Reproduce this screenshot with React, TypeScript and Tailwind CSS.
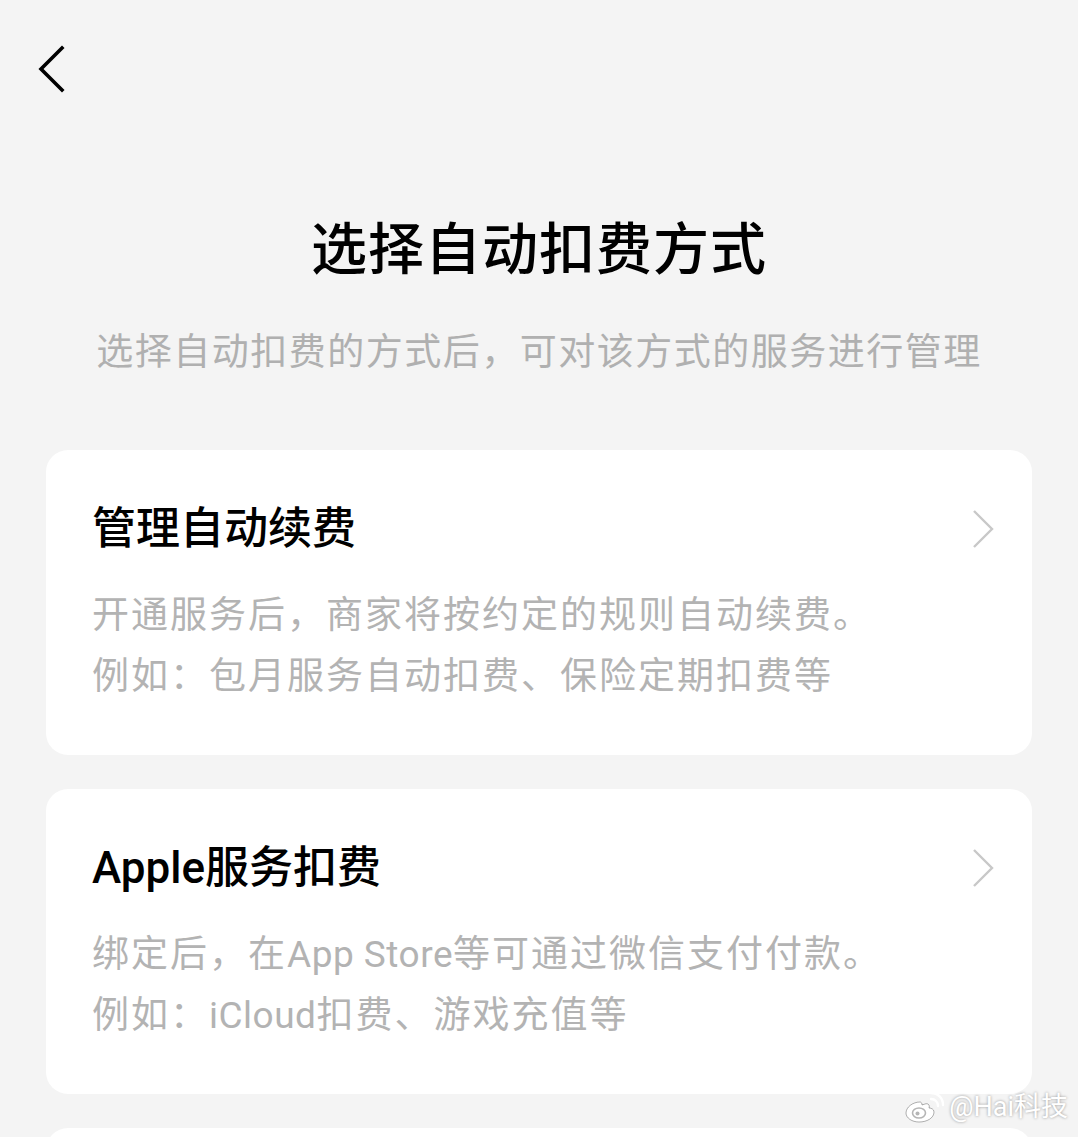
const font = {
  fontFamily: 'Roboto, "Noto Sans CJK SC", sans-serif',
};

interface Option {
  title: string;
  lines: string[];
}

const options: Option[] = [
  {
    title: "管理自动续费",
    lines: [
      "开通服务后，商家将按约定的规则自动续费。",
      "例如：包月服务自动扣费、保险定期扣费等",
    ],
  },
  {
    title: "Apple服务扣费",
    lines: ["绑定后，在App Store等可通过微信支付付款。", "例如：iCloud扣费、游戏充值等"],
  },
];

function Chevron({ dir }: { dir: "left" | "right" }) {
  if (dir === "left") {
    return (
      <svg width="28" height="48" viewBox="0 0 28 48" fill="none">
        <path
          d="M24 3 3 24l21 21"
          stroke="black"
          strokeWidth="3.6"
          strokeLinecap="square"
        />
      </svg>
    );
  }
  return (
    <svg width="24" height="40" viewBox="0 0 24 40" fill="none">
      <path d="M3 2l18 18L3 38" stroke="#c8c8c8" strokeWidth="2.4" />
    </svg>
  );
}

// latin runs keep normal spacing, CJK gets a little extra
function Line({ text }: { text: string }) {
  const parts = text.split(/([A-Za-z][A-Za-z ]*[A-Za-z])/);
  return (
    <p>
      {parts.map((p, i) =>
        /[A-Za-z]/.test(p) ? (
          <span key={i} className="tracking-[0.5px]">
            {p}
          </span>
        ) : (
          <span key={i}>{p}</span>
        )
      )}
    </p>
  );
}

function OptionCard({ item }: { item: Option }) {
  return (
    <div className="rounded-[22px] bg-white pb-[48px] pl-[46px] pr-[37px] pt-[54px]">
      <div className="flex items-center justify-between">
        <h2 className="text-[44px] font-medium leading-[50px] text-black">
          {item.title}
        </h2>
        <Chevron dir="right" />
      </div>
      <div className="mt-[31px] text-[37px] leading-[61px] tracking-[2px] text-[#b3b3b3]">
        {item.lines.map((l) => (
          <Line key={l} text={l} />
        ))}
      </div>
    </div>
  );
}

function WeiboMark() {
  return (
    <div
      className="absolute bottom-[10px] right-[10px] flex items-center gap-[3px] text-[27px] text-white"
      style={{ textShadow: "0 0 3px rgba(0,0,0,0.4)" }}
    >
      <svg width="42" height="34" viewBox="0 0 42 34" fill="none">
        <path
          d="M16 12c-7 0-14 5-14 11 0 5 6 9 13 9 8 0 15-4 15-10 0-3-3-4-5-4 1-3-1-5-4-4l-3 1c0-2-1-3-2-3z"
          fill="white"
          stroke="rgba(0,0,0,0.3)"
          strokeWidth="1"
        />
        <ellipse cx="15" cy="23" rx="6.5" ry="5" fill="none" stroke="#b5b5b5" strokeWidth="1.6" />
        <circle cx="13.5" cy="23.5" r="2" fill="#b5b5b5" />
        <path d="M27 9c4 0 7 3 7 7" stroke="white" strokeWidth="2.4" strokeLinecap="round" />
        <path d="M27 3c7 0 12 5 12 12" stroke="white" strokeWidth="2.4" strokeLinecap="round" />
      </svg>
      <span>@Hai科技</span>
    </div>
  );
}

export default function App() {
  return (
    <div
      className="relative h-[1137px] w-[1078px] overflow-hidden bg-[#f4f4f4]"
      style={font}
    >
      <div className="pl-[38px] pt-[45px]">
        <Chevron dir="left" />
      </div>

      <h1 className="mt-[125px] text-center text-[56px] font-medium leading-[64px] tracking-[1px] text-black">
        选择自动扣费方式
      </h1>
      <p className="mt-[46px] text-center text-[37px] leading-[50px] tracking-[1.5px] text-[#b0b0b0]">
        选择自动扣费的方式后，可对该方式的服务进行管理
      </p>

      <div className="mx-[46px] mt-[72px] flex flex-col gap-[34px]">
        {options.map((o) => (
          <OptionCard key={o.title} item={o} />
        ))}
        <div className="h-[60px] rounded-t-[22px] bg-white" />
      </div>

      <WeiboMark />
    </div>
  );
}
